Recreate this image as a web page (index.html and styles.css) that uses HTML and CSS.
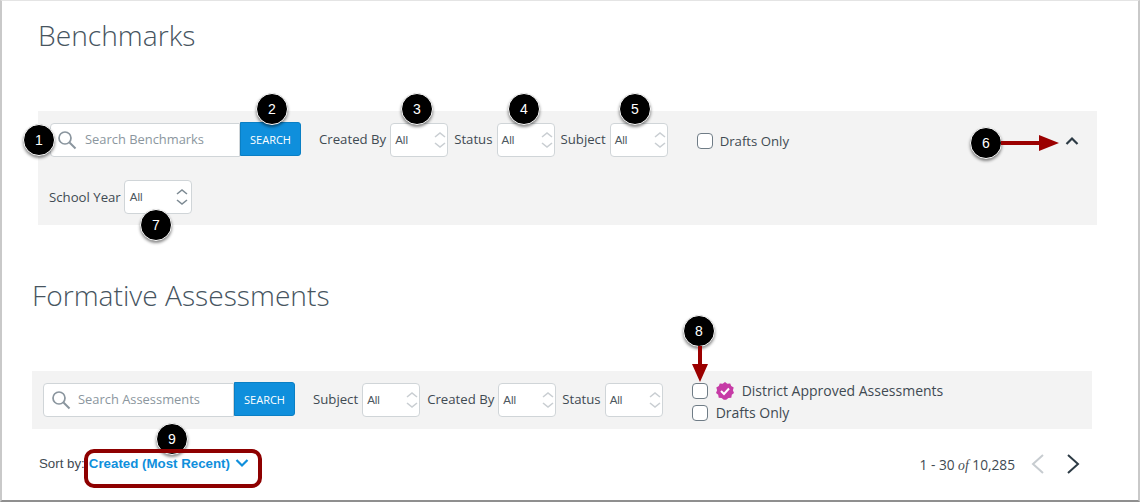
FILE: index.html
```html
<!DOCTYPE html>
<html lang="en">
<head>
<meta charset="UTF-8" />
<title>Benchmarks and Formative Assessments</title>
<link rel="stylesheet" href="styles.css">
</head>
<body>
<div class="frame">
  <section class="benchmarks">
    <h1 class="title">Benchmarks</h1>
    <div class="filters">
      <div class="row">
        <div class="search-box">
          <svg class="search-icon" width="20" height="20" viewBox="0 0 20 20"><circle cx="8" cy="8" r="6" fill="none" stroke="#8a959e" stroke-width="1.7"/><path d="M12.5 12.5L18.5 18.5" stroke="#8a959e" stroke-width="2" fill="none"/></svg>
          <span class="placeholder">Search Benchmarks</span>
        </div>
        <button class="search-btn">SEARCH</button>
        <span class="label first-label">Created By</span>
        <div class="select w58"><span>All</span>
          <svg class="updown" width="14" height="22" viewBox="0 0 14 22"><path d="M2 8L7 4L12 8M2 14L7 18L12 14" fill="none" stroke="#c9ced2" stroke-width="1.6"/></svg>
        </div>
        <span class="label">Status</span>
        <div class="select w58"><span>All</span>
          <svg class="updown" width="14" height="22" viewBox="0 0 14 22"><path d="M2 8L7 4L12 8M2 14L7 18L12 14" fill="none" stroke="#c9ced2" stroke-width="1.6"/></svg>
        </div>
        <span class="label">Subject</span>
        <div class="select w58"><span>All</span>
          <svg class="updown" width="14" height="22" viewBox="0 0 14 22"><path d="M2 8L7 4L12 8M2 14L7 18L12 14" fill="none" stroke="#c9ced2" stroke-width="1.6"/></svg>
        </div>
        <label class="check drafts-top"><i class="box"></i>Drafts Only</label>
        <svg class="collapse" width="14" height="10" viewBox="0 0 14 10"><path d="M1.5 8L7 2.5L12.5 8" fill="none" stroke="#2d3b45" stroke-width="2.2"/></svg>
      </div>
      <div class="row second-row">
        <span class="label year-label">School Year</span>
        <div class="select w68"><span>All</span>
          <svg class="updown" width="14" height="22" viewBox="0 0 14 22"><path d="M2 8L7 4L12 8M2 14L7 18L12 14" fill="none" stroke="#7d8a93" stroke-width="1.6"/></svg>
        </div>
      </div>
    </div>
  </section>

  <section class="assessments">
    <h2 class="title">Formative Assessments</h2>
    <div class="filters">
      <div class="row">
        <div class="search-box">
          <svg class="search-icon" width="20" height="20" viewBox="0 0 20 20"><circle cx="8" cy="8" r="6" fill="none" stroke="#8a959e" stroke-width="1.7"/><path d="M12.5 12.5L18.5 18.5" stroke="#8a959e" stroke-width="2" fill="none"/></svg>
          <span class="placeholder">Search Assessments</span>
        </div>
        <button class="search-btn">SEARCH</button>
        <span class="label first-label">Subject</span>
        <div class="select w58"><span>All</span>
          <svg class="updown" width="14" height="22" viewBox="0 0 14 22"><path d="M2 8L7 4L12 8M2 14L7 18L12 14" fill="none" stroke="#c9ced2" stroke-width="1.6"/></svg>
        </div>
        <span class="label created-label">Created By</span>
        <div class="select w58"><span>All</span>
          <svg class="updown" width="14" height="22" viewBox="0 0 14 22"><path d="M2 8L7 4L12 8M2 14L7 18L12 14" fill="none" stroke="#c9ced2" stroke-width="1.6"/></svg>
        </div>
        <span class="label">Status</span>
        <div class="select w58"><span>All</span>
          <svg class="updown" width="14" height="22" viewBox="0 0 14 22"><path d="M2 8L7 4L12 8M2 14L7 18L12 14" fill="none" stroke="#c9ced2" stroke-width="1.6"/></svg>
        </div>
        <div class="checks">
          <label class="check"><i class="box"></i>
            <svg class="badge" width="18" height="18" viewBox="0 0 18 18"><path d="M9 0L11.3 1.7L14.2 1.4L15.2 4.1L17.7 5.5L16.9 8.3L18 11L15.8 12.8L15.3 15.7L12.4 15.9L10.2 17.8L7.8 17.8L5.6 15.9L2.7 15.7L2.2 12.8L0 11L1.1 8.3L0.3 5.5L2.8 4.1L3.8 1.4L6.7 1.7Z" fill="#c63ba6"/><path d="M5 9L8 12L13 6.5" fill="none" stroke="#fff" stroke-width="2"/></svg>
            <span class="approved">District Approved Assessments</span></label>
          <label class="check"><i class="box"></i>Drafts Only</label>
        </div>
      </div>
    </div>
    <div class="results-bar">
      <div class="sort">
        <span class="sort-label">Sort by:</span>
        <a class="sort-link">Created (Most Recent)</a>
        <svg width="14" height="10" viewBox="0 0 14 10"><path d="M1.5 2L7 7.5L12.5 2" fill="none" stroke="#0f8fdc" stroke-width="2.2"/></svg>
      </div>
      <div class="pager">
        <span>1 - 30 <em>of</em> 10,285</span>
        <svg class="prev" width="14" height="20" viewBox="0 0 14 20"><path d="M12 1L2 10L12 19" fill="none" stroke="#c7ccd0" stroke-width="2"/></svg>
        <svg class="next" width="14" height="20" viewBox="0 0 14 20"><path d="M2 1L12 10L2 19" fill="none" stroke="#2d3b45" stroke-width="2"/></svg>
      </div>
    </div>
  </section>

  <!-- callouts sit on top of the screenshot -->
  <span class="dot d1">1</span>
  <span class="dot d2">2</span>
  <span class="dot d3">3</span>
  <span class="dot d4">4</span>
  <span class="dot d5">5</span>
  <span class="dot d6">6</span>
  <span class="dot d7">7</span>
  <span class="dot d8">8</span>
  <span class="dot d9">9</span>
  <svg class="arrow a6" width="58" height="16" viewBox="0 0 58 16"><path d="M0 6H38V0L58 8L38 16V10H0Z" fill="#9b0000"/></svg>
  <svg class="arrow a8" width="16" height="36" viewBox="0 0 16 36"><path d="M6 0H10V18H16L8 36L0 18H6Z" fill="#9b0000"/></svg>
  <div class="sort-mark"></div>
</div>
</body>
</html>
```

FILE: styles.css
```css
* {
  box-sizing: border-box;
}
body {
  margin: 0;
  background: #fff;
  font-family: 'Open Sans', sans-serif;
  color: #3f4a52;
}
.frame {
  position: relative;
  width: 1140px;
  height: 502px;
  border-top: 1px solid #e4e4e4;
  border-left: 2px solid #c9c9c9;
  border-right: 2px solid #c9c9c9;
  border-bottom: 2px solid #8f8f8f;
  overflow: hidden;
}
.title {
  margin: 0;
  font-family: 'Open Sans', sans-serif;
  font-weight: 300;
  font-size: 28.2px;
  line-height: 36px;
  color: #47555f;
}
.benchmarks {
  padding: 16px 0 0 36px;
}
.benchmarks .filters {
  width: 1059px;
  height: 114px;
  margin-top: 58px;
  padding: 12px 0 0 12px;
}
.benchmarks .search-box {
  width: 190px;
  padding-left: 6px;
}
.benchmarks .placeholder {
  margin-left: 8px;
}
.assessments {
  padding: 0 0 0 30px;
  margin-top: 52px;
}
.assessments .filters {
  width: 1060px;
  height: 58px;
  margin-top: 58px;
  padding: 12px 0 0 11px;
}
.filters {
  background: #f3f3f3;
}
.row {
  display: flex;
  align-items: flex-start;
  position: relative;
}
.second-row {
  margin-top: 23px;
}
.search-box {
  width: 191px;
  height: 34px;
  background: #fff;
  border: 1px solid #d0d5d8;
  border-radius: 4px 0 0 4px;
  display: flex;
  align-items: center;
  padding-left: 7px;
}
.search-icon {
  flex: none;
}
.placeholder {
  margin-left: 7px;
  margin-bottom: 2px;
  font-size: 12.9px;
  color: #8b969e;
}
.search-btn {
  width: 61px;
  height: 34px;
  margin-top: -1px;
  padding: 0;
  border: 1px solid #0a7fc4;
  border-radius: 0 3px 3px 0;
  background: #0f8fdc;
  color: #fff;
  font-family: 'Open Sans', sans-serif;
  font-size: 11px;
}
.label {
  margin: 0 4px 0 6px;
  font-size: 13.2px;
  line-height: 33px;
  white-space: nowrap;
}
.first-label {
  margin-left: 18px;
}
.created-label {
  margin-left: 7px;
}
.year-label {
  margin: 0 3px 0 -1px;
  line-height: 35px;
}
.select {
  position: relative;
  height: 34px;
  background: #fff;
  border: 1px solid #d0d5d8;
  border-radius: 4px;
  padding-left: 4px;
  font-family: 'Liberation Sans', sans-serif;
  font-size: 11.5px;
  line-height: 33px;
  color: #4d5860;
}
.w58 {
  width: 58px;
}
.w68 {
  width: 68px;
  padding-left: 5px;
}
.updown {
  position: absolute;
  right: 0;
  top: 5px;
}
.w68 .updown {
  right: 2px;
}
.check {
  display: flex;
  align-items: center;
  font-size: 14px;
  line-height: 22px;
  white-space: nowrap;
}
.box {
  width: 16px;
  height: 16px;
  margin-right: 8px;
  border: 1.5px solid #6f7c86;
  border-radius: 4px;
  background: #fff;
  flex: none;
}
.drafts-top {
  margin: 7px 0 0 29px;
  font-size: 13.2px;
}
.drafts-top .box {
  margin-right: 7px;
}
.collapse {
  position: absolute;
  right: 18px;
  top: 13px;
}
.checks {
  margin: -3px 0 0 29px;
}
.badge {
  margin-right: 8px;
}
.results-bar {
  display: flex;
  justify-content: space-between;
  align-items: center;
  height: 30px;
  margin-top: 20px;
  padding-left: 7px;
  width: 1060px;
}
.sort {
  display: flex;
  align-items: center;
  padding-bottom: 2px;
  font-family: 'Liberation Sans', sans-serif;
  font-size: 13.3px;
}
.sort-label {
  margin-right: 4px;
}
.sort-link {
  color: #0f8fdc;
  font-weight: 700;
  margin-right: 5px;
}
.pager {
  display: flex;
  align-items: center;
  font-size: 13.7px;
  margin-right: 12px;
}
.pager em {
  font-family: 'Liberation Serif', serif;
}
.prev {
  margin-left: 16px;
}
.next {
  margin-left: 21px;
}
.dot {
  position: absolute;
  width: 32px;
  height: 32px;
  border-radius: 50%;
  background: #000;
  border: 1px solid #fff;
  box-shadow: 0 2px 3px rgba(0,0,0,0.45);
  color: #fff;
  font-family: 'Liberation Sans', sans-serif;
  font-size: 14px;
  line-height: 30px;
  text-align: center;
}
.d1 { left: 21px; top: 123px; }
.d2 { left: 254px; top: 92px; }
.d3 { left: 399px; top: 92px; }
.d4 { left: 506px; top: 92px; }
.d5 { left: 617px; top: 92px; }
.d6 { left: 968px; top: 126px; }
.d7 { left: 138px; top: 208px; }
.d8 { left: 681px; top: 314px; }
.d9 { left: 154px; top: 422px; }
.arrow {
  position: absolute;
}
.a6 {
  left: 999px;
  top: 134px;
}
.a8 {
  left: 690px;
  top: 345px;
}
.sort-mark {
  position: absolute;
  left: 82px;
  top: 448px;
  width: 178px;
  height: 39px;
  border: 4px solid #8e0000;
  border-radius: 10px;
}
```
